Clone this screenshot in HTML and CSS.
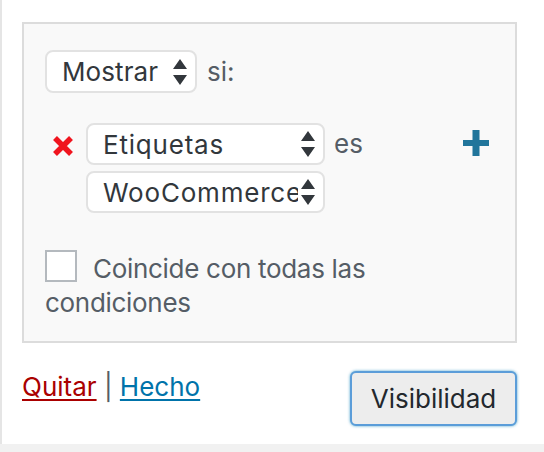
FILE: index.html
```html
<!DOCTYPE html>
<html lang="es">
<head>
<meta charset="utf-8">
<title>Visibilidad</title>
<link rel="stylesheet" href="styles.css">
</head>
<body>
<div class="widget">
  <div class="conditions">
    <div class="row row-action">
      <div class="select select-action">
        <span class="select-text">Mostrar</span>
        <svg class="arrows" viewBox="0 0 14 26" width="14" height="26"><path d="M7 0 L14 10 L0 10 Z M0 16 L14 16 L7 26 Z"/></svg>
      </div>
      <span class="label">si:</span>
    </div>
    <div class="row row-rule">
      <svg class="delete" viewBox="0 0 22 20" width="22" height="20"><path d="M3 2 L19 18 M19 2 L3 18"/></svg>
      <div class="rule-selects">
        <div class="select select-wide">
          <span class="select-text">Etiquetas</span>
          <svg class="arrows" viewBox="0 0 14 26" width="14" height="26"><path d="M7 0 L14 10 L0 10 Z M0 16 L14 16 L7 26 Z"/></svg>
        </div>
        <div class="select select-wide">
          <span class="select-text">WooCommerce</span>
          <svg class="arrows" viewBox="0 0 14 26" width="14" height="26"><path d="M7 0 L14 10 L0 10 Z M0 16 L14 16 L7 26 Z"/></svg>
        </div>
      </div>
      <span class="label label-es">es</span>
      <svg class="add" viewBox="0 0 26 26" width="26" height="26"><path d="M9.5 0 H16.5 V10 H26 V16 H16.5 V26 H9.5 V16 H0 V10 H9.5 Z"/></svg>
    </div>
    <label class="match">
      <span class="checkbox"></span>Coincide con todas las condiciones
    </label>
  </div>
  <div class="actions">
    <div class="links">
      <a class="link-remove" href="#">Quitar</a> <span class="sep">|</span> <a class="link-done" href="#">Hecho</a>
    </div>
    <button class="button" type="button">Visibilidad</button>
  </div>
</div>
</body>
</html>
```

FILE: styles.css
```css
html, body {
  margin: 0;
  padding: 0;
}
body {
  background: #f1f1f1;
  width: 544px;
  height: 452px;
  overflow: hidden;
  font-family: Inter, "Liberation Sans", Arial, sans-serif;
  font-size: 26px;
  color: #32373c;
}
.widget {
  box-sizing: border-box;
  height: 444px;
  background: #fff;
  border-left: 2px solid #e5e5e5;
  padding: 22px 27px 0 20px;
}
.conditions {
  box-sizing: border-box;
  height: 321px;
  background: #f9f9f9;
  border: 2px solid #dcdcdc;
  padding: 26px 20px 0 21px;
}
.row {
  display: flex;
  align-items: center;
}
.select {
  box-sizing: border-box;
  display: flex;
  align-items: center;
  height: 43px;
  background: #fff;
  border: 2px solid #e2e2e2;
  border-radius: 8px;
  padding: 0 8px 0 15px;
  color: #32373c;
}
.select-text {
  flex: 1;
  white-space: nowrap;
  overflow: hidden;
  line-height: 30px;
  padding-top: 1px;
  letter-spacing: 0.6px;
}
.arrows {
  flex: none;
  fill: #32373c;
  margin-left: 3px;
}
.select-action {
  width: 152px;
}
.select-action .select-text {
  letter-spacing: 0.1px;
}
.label {
  color: #555d66;
  margin-left: 10px;
}
.row-rule {
  margin-top: 30px;
  align-items: flex-start;
}
.delete {
  flex: none;
  stroke: #f0141e;
  stroke-width: 5.5;
  margin: 13px 12px 0 7px;
}
.rule-selects {
  display: flex;
  flex-direction: column;
  gap: 6px;
}
.select-wide {
  width: 239px;
  height: 42px;
}
.select-wide .select-text {
  letter-spacing: 0.8px;
}
.label-es {
  margin-left: 9px;
  line-height: 42px;
}
.add {
  flex: none;
  fill: #21759b;
  margin: 7px 6px 0 auto;
}
.match {
  display: block;
  margin-top: 39px;
  color: #555d66;
  line-height: 34px;
  letter-spacing: -0.3px;
  width: 330px;
}
.checkbox {
  box-sizing: border-box;
  display: inline-block;
  width: 32px;
  height: 32px;
  background: #fff;
  border: 2px solid #b4b9be;
  vertical-align: top;
  margin: -2px 16px 0 0;
}
.actions {
  display: flex;
  justify-content: space-between;
  align-items: flex-start;
  margin-top: 28px;
}
.links {
  color: #555d66;
  line-height: 32px;
}
.links a {
  text-decoration: underline;
  text-decoration-thickness: 2px;
  text-underline-offset: 3px;
}
.link-remove {
  color: #a00;
}
.link-done {
  color: #0073aa;
}
.button {
  box-sizing: border-box;
  width: 167px;
  height: 55px;
  font: inherit;
  color: #23282d;
  background: #ededed;
  border: 2px solid #5b9dd9;
  border-radius: 6px;
  box-shadow: 0 0 3px rgba(30, 140, 190, 0.8);
  padding: 0;
}
```
